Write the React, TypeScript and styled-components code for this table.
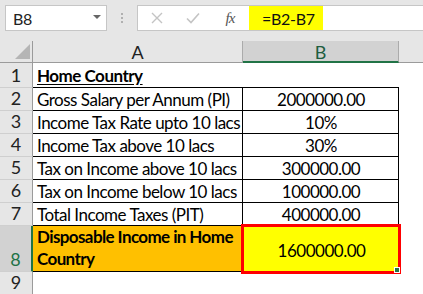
import React, { FC } from "react";
import styled, { createGlobalStyle } from "styled-components";

const GlobalStyle = createGlobalStyle`
  html, body {
    margin: 0;
    padding: 0;
    background: #ffffff;
    font-family: Lato, "Open Sans", sans-serif;
  }
`;

const Page = styled.div`
  width: 423px;
  height: 294px;
  overflow: hidden;
  background: #ffffff;
`;

const Toolbar = styled.div`
  height: 41px;
  background: #e6e6e6;
  display: flex;
  align-items: flex-start;
  padding: 5px 0 0 5px;
  box-sizing: border-box;
`;

const NameBox = styled.div`
  width: 102px;
  height: 26px;
  box-sizing: border-box;
  background: #ffffff;
  border: 1px solid #c6c6c6;
  display: flex;
  align-items: center;
  justify-content: space-between;
  padding: 0 5px 0 7px;
  font-size: 16px;
  letter-spacing: -0.3px;
  color: #222;
`;

const DropArrow = styled.span`
  width: 0;
  height: 0;
  border-left: 4px solid transparent;
  border-right: 4px solid transparent;
  border-top: 4px solid #666;
  margin-top: -2px;
`;

const Dots = styled.div`
  width: 30px;
  height: 26px;
  display: flex;
  flex-direction: column;
  align-items: center;
  justify-content: center;
  gap: 2px;

  span {
    width: 2px;
    height: 2px;
    background: #b0b0b0;
  }
`;

const FuncBox = styled.div`
  width: 112px;
  height: 26px;
  box-sizing: border-box;
  background: #ffffff;
  border: 1px solid #c6c6c6;
  border-right: none;
  display: flex;
  align-items: center;
  padding-left: 12px;
`;

const IconSlot = styled.div<{ $w: number }>`
  width: ${(p) => p.$w}px;
  display: flex;
  align-items: center;
  justify-content: center;
`;

const Fx = styled.span`
  font-family: "Liberation Serif", serif;
  font-style: italic;
  font-size: 15px;
  color: #555;
  letter-spacing: -1px;
`;

const FormulaBox = styled.div`
  flex: 1;
  height: 26px;
  box-sizing: border-box;
  background: #ffffff;
  border-top: 1px solid #c6c6c6;
  border-bottom: 1px solid #c6c6c6;
  display: flex;
`;

const FormulaText = styled.div`
  background: #ffff00;
  width: 74px;
  height: 100%;
  box-sizing: border-box;
  padding-left: 13px;
  display: flex;
  align-items: center;
  font-size: 16px;
  letter-spacing: -0.3px;
  color: #111;
`;

const Sheet = styled.div`
  display: grid;
  grid-template-columns: 33px 210px 156px 1fr;
  grid-template-rows: 22px 25px repeat(6, 23px) 46px 23px;
  font-size: 17px;
  letter-spacing: -0.5px;
  color: #000;
`;

const HeadCell = styled.div<{ $sel?: boolean }>`
  background: ${(p) => (p.$sel ? "#d2d2d2" : "#e6e6e6")};
  box-sizing: border-box;
  border-right: 1px solid #ababab;
  border-bottom: ${(p) => (p.$sel ? "2px solid #217346" : "1px solid #9b9b9b")};
  display: flex;
  align-items: center;
  justify-content: center;
  font-size: 18px;
  letter-spacing: 0;
  color: ${(p) => (p.$sel ? "#1e5e3f" : "#222")};
  padding-top: 1px;
`;

const Corner = styled(HeadCell)`
  position: relative;
  border-right: 1px solid #9b9b9b;

  &::after {
    content: "";
    position: absolute;
    right: 2px;
    bottom: 3px;
    width: 0;
    height: 0;
    border-left: 15px solid transparent;
    border-bottom: 15px solid #b5b5b5;
  }
`;

const RowHead = styled.div<{ $sel?: boolean }>`
  background: ${(p) => (p.$sel ? "#d2d2d2" : "#e6e6e6")};
  box-sizing: border-box;
  border-right: ${(p) => (p.$sel ? "2px solid #217346" : "1px solid #9b9b9b")};
  border-bottom: 1px solid #cfcfcf;
  display: flex;
  align-items: flex-end;
  justify-content: center;
  padding-bottom: 1px;
  font-size: 18px;
  letter-spacing: 0;
  color: ${(p) => (p.$sel ? "#217346" : "#222")};
`;

const Cell = styled.div<{
  $center?: boolean;
  $box?: boolean;
  $bg?: string;
  $bold?: boolean;
}>`
  box-sizing: border-box;
  background: ${(p) => p.$bg || "#ffffff"};
  border-bottom: 1px solid #000;
  border-right: ${(p) => (p.$box ? "1px solid #000" : "none")};
  display: flex;
  align-items: center;
  justify-content: ${(p) => (p.$center ? "center" : "flex-start")};
  padding: 0 3px 0 4px;
  font-weight: ${(p) => (p.$bold ? 700 : 400)};
  white-space: nowrap;
  overflow: hidden;
`;

const Title = styled.span`
  font-weight: 700;
  text-decoration: underline;
  text-underline-offset: 2px;
`;

const WrapCell = styled(Cell)`
  white-space: normal;
  align-items: flex-end;
  line-height: 22px;
  padding-bottom: 1px;
  padding-right: 0;
  border-right: 1px solid #000;
  letter-spacing: -0.6px;
`;

const ActiveCell = styled(Cell)`
  position: relative;
  outline: 3px solid #ff0000;
  outline-offset: -1px;
  z-index: 1;
  border: none;
  padding-top: 2px;
  overflow: visible;
`;

const FillHandle = styled.span`
  position: absolute;
  right: -1px;
  bottom: -1px;
  width: 4px;
  height: 4px;
  background: #217346;
  border: 1px solid #ffffff;
  z-index: 2;
`;

const Blank = styled.div`
  background: #ffffff;
`;

const BlankHead = styled.div`
  background: #e6e6e6;
  border-bottom: 1px solid #9b9b9b;
`;

interface Row {
  label: string;
  value: string;
}

const rows: Row[] = [
  { label: "Gross Salary per Annum (PI)", value: "2000000.00" },
  { label: "Income Tax Rate upto 10 lacs", value: "10%" },
  { label: "Income Tax above 10 lacs", value: "30%" },
  { label: "Tax on Income above 10 lacs", value: "300000.00" },
  { label: "Tax on Income below 10 lacs", value: "100000.00" },
  { label: "Total Income Taxes (PIT)", value: "400000.00" },
];

const App: FC = () => {
  return (
    <Page>
      <GlobalStyle />
      <Toolbar>
        <NameBox>
          B8
          <DropArrow />
        </NameBox>
        <Dots>
          <span />
          <span />
          <span />
        </Dots>
        <FuncBox>
          <IconSlot $w={14}>
            <svg width="12" height="12" viewBox="0 0 12 12">
              <path d="M1 1 L11 11 M11 1 L1 11" stroke="#c4c4c4" strokeWidth="1.4" />
            </svg>
          </IconSlot>
          <IconSlot $w={58}>
            <svg width="14" height="12" viewBox="0 0 14 12">
              <path d="M1 6.5 L5 10.5 L13 1.5" stroke="#c4c4c4" strokeWidth="1.6" fill="none" />
            </svg>
          </IconSlot>
          <IconSlot $w={16}>
            <Fx>fx</Fx>
          </IconSlot>
        </FuncBox>
        <FormulaBox>
          <FormulaText>=B2-B7</FormulaText>
        </FormulaBox>
      </Toolbar>

      <Sheet>
        <Corner />
        <HeadCell>A</HeadCell>
        <HeadCell $sel>B</HeadCell>
        <BlankHead />

        <RowHead>1</RowHead>
        <Cell>
          <Title>Home Country</Title>
        </Cell>
        <Cell />
        <Blank />

        {rows.map((r, i) => (
          <React.Fragment key={i}>
            <RowHead>{i + 2}</RowHead>
            <Cell $box>{r.label}</Cell>
            <Cell $box $center>
              {r.value}
            </Cell>
            <Blank />
          </React.Fragment>
        ))}

        <RowHead $sel>8</RowHead>
        <WrapCell $bg="#ffc000" $bold>
          Disposable Income in Home Country
        </WrapCell>
        <ActiveCell $bg="#ffff00" $center>
          1600000.00
          <FillHandle />
        </ActiveCell>
        <Blank />

        <RowHead>9</RowHead>
        <Blank />
        <Blank />
        <Blank />
      </Sheet>
    </Page>
  );
};

export default App;
